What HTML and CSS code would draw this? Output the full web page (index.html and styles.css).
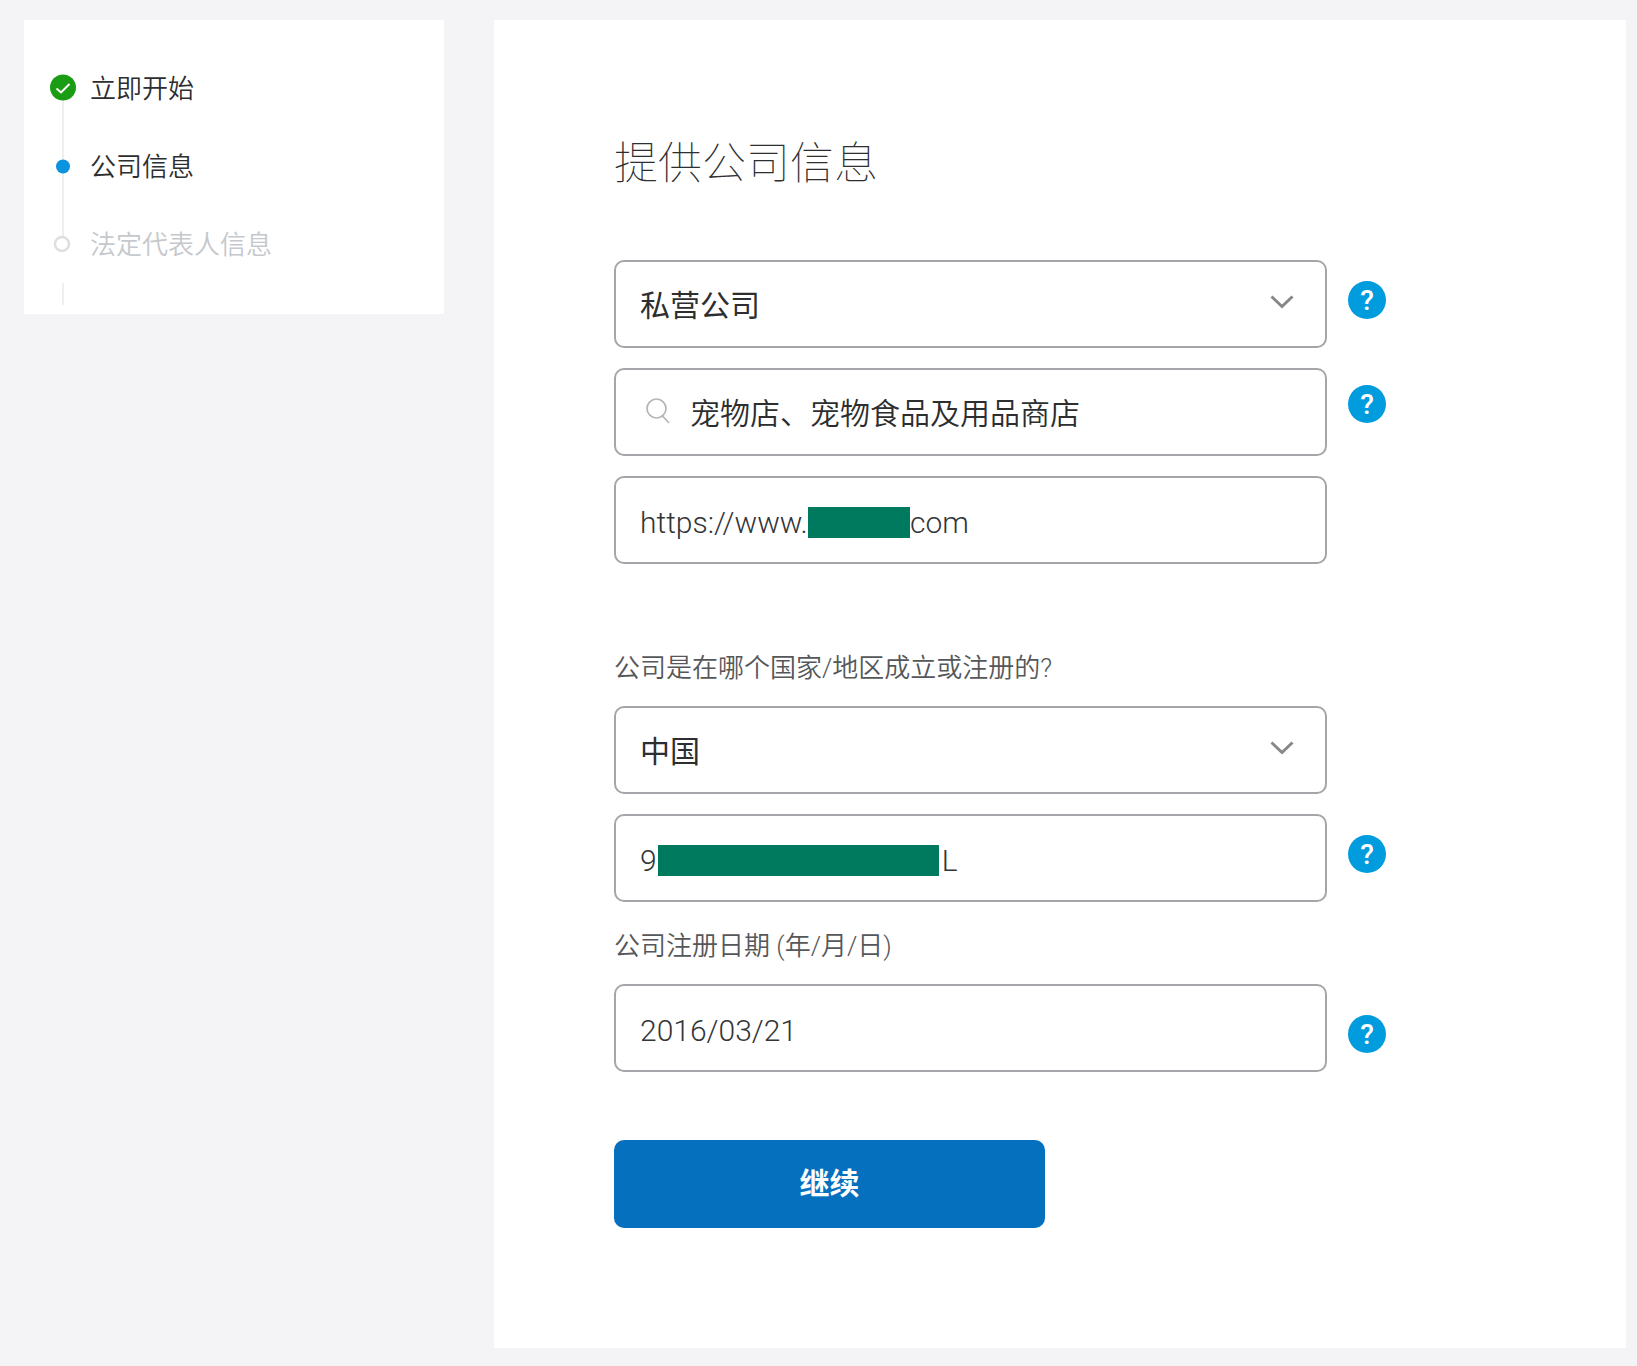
FILE: index.html
```html
<!DOCTYPE html>
<html lang="zh-CN">
<head>
<meta charset="utf-8">
<meta name="viewport" content="width=device-width, initial-scale=1">
<title>提供公司信息</title>
<link rel="stylesheet" href="styles.css">
</head>
<body>
<div class="page">
  <aside class="sidebar">
    <ol class="steps">
      <li class="step step--linked">
        <svg class="step__marker" viewBox="0 0 26 26" aria-hidden="true"><circle cx="13" cy="12.500" r="13" fill="#1a9c14"/><path d="M6.500 13.500l4.500 4 8.500-8.500" fill="none" stroke="#fff" stroke-width="2"/></svg>
        <span class="step__name">立即开始</span>
      </li>
      <li class="step step--linked" aria-current="step">
        <svg class="step__marker" viewBox="0 0 26 26" aria-hidden="true"><circle cx="13" cy="13.500" r="7" fill="#0c93e0"/></svg>
        <span class="step__name">公司信息</span>
      </li>
      <li class="step step--upcoming">
        <svg class="step__marker" viewBox="0 0 26 26" aria-hidden="true"><circle cx="12" cy="13" r="7" fill="#fff" stroke="#dedede" stroke-width="2.500"/></svg>
        <span class="step__name">法定代表人信息</span>
      </li>
      <li class="steps__more" aria-hidden="true"></li>
    </ol>
  </aside>

  <main class="panel">
    <form class="form">
      <h1 class="title">提供公司信息</h1>

      <div class="group">
        <div class="row">
          <div class="field">
            <select class="control control--select" aria-label="公司类型"><option>私营公司</option></select>
            <svg class="field__chevron" viewBox="0 0 24 14" aria-hidden="true"><path d="M1.500 1.500L12 11.500 22.500 1.500" fill="none" stroke="#87878a" stroke-width="3"/></svg>
          </div>
          <button class="help" type="button" aria-label="帮助">?</button>
        </div>
        <div class="row">
          <div class="field">
            <svg class="field__search" viewBox="0 0 24 26" aria-hidden="true"><circle cx="10.500" cy="10.500" r="9.500" fill="none" stroke="#b2b4b8" stroke-width="1.700"/><path d="M16 17.500l7 7.500" fill="none" stroke="#b2b4b8" stroke-width="1.700"/></svg>
            <input class="control control--search" type="text" aria-label="经营类别" value="宠物店、宠物食品及用品商店">
          </div>
          <button class="help help--high" type="button" aria-label="帮助">?</button>
        </div>
        <div class="row">
          <div class="field">
            <input class="control" type="text" aria-label="网站" value="https://www.              com">
            <span class="mask mask--site"></span>
          </div>
        </div>
      </div>

      <div class="group group--country">
        <label class="label" for="country">公司是在哪个国家/地区成立或注册的?</label>
        <div class="row">
          <div class="field">
            <select class="control control--select" id="country"><option>中国</option></select>
            <svg class="field__chevron" viewBox="0 0 24 14" aria-hidden="true"><path d="M1.500 1.500L12 11.500 22.500 1.500" fill="none" stroke="#87878a" stroke-width="3"/></svg>
          </div>
        </div>
        <div class="row">
          <div class="field">
            <input class="control" type="text" aria-label="统一社会信用代码" value="9                                       L">
            <span class="mask mask--code"></span>
          </div>
          <button class="help" type="button" aria-label="帮助">?</button>
        </div>
      </div>

      <div class="group group--date">
        <label class="label" for="date">公司注册日期 (年/月/日)</label>
        <div class="row">
          <div class="field">
            <input class="control" id="date" type="text" value="2016/03/21">
          </div>
          <button class="help help--low" type="button" aria-label="帮助">?</button>
        </div>
      </div>

      <button class="submit" type="submit">继续</button>
    </form>
  </main>
</div>
</body>
</html>
```
FILE: styles.css
```css
* {
  box-sizing: border-box;
}

body {
  margin: 0;
  background: #f4f4f6;
  color: #2c2e2f;
  font-family: Roboto, "Noto Sans CJK SC", sans-serif;
}

.page {
  display: flex;
  align-items: flex-start;
  gap: 50px;
  padding: 20px 11px 18px 24px;
}

/* Progress */
.sidebar {
  flex: 0 1 420px;
  background: #fff;
}

.steps {
  margin: 0;
  padding: 29px 26px 9px;
  list-style: none;
}

.step {
  position: relative;
  display: flex;
  align-items: center;
  gap: 14px;
  height: 78px;
  font-size: 26px;
  font-weight: 350;
  line-height: 36px;
}

.step--linked::before {
  content: "";
  position: absolute;
  left: 12px;
  top: 50%;
  width: 2px;
  height: 100%;
  background: #efefef;
}

.step--upcoming {
  color: #c5c8cc;
}

.step__marker {
  position: relative;
  z-index: 1;
  flex: none;
  width: 26px;
  height: 26px;
  overflow: visible;
}

.step__name {
  padding-top: 2px;
}

.steps__more {
  width: 2px;
  height: 22px;
  margin-left: 12px;
  background: #efefef;
}

/* Form */
.panel {
  flex: 1;
  min-width: 0;
  padding: 114px 120px 120px;
  background: #fff;
}

.title {
  margin: 0 0 66px;
  font-size: 44px;
  font-weight: 100;
  line-height: 60px;
}

.group {
  display: grid;
  gap: 20px;
}

.group--country {
  margin-top: 86px;
}

.group--date {
  margin-top: 26px;
}

.label {
  color: #55575a;
  font-size: 26px;
  font-weight: 350;
  line-height: 36px;
}

.row {
  display: grid;
  grid-template-columns: minmax(0, 713px) 38px;
  gap: 21px;
  align-items: start;
}

.field {
  position: relative;
}

.control {
  display: block;
  width: 100%;
  height: 88px;
  padding: 4px 24px 0;
  border: 2px solid #a6a6aa;
  border-radius: 10px;
  background: #fff;
  color: #333537;
  font: 300 30px Roboto, "Noto Sans CJK SC", sans-serif;
}

.control--select {
  appearance: none;
  padding-top: 2px;
  color: #2c2e2f;
  font-weight: 400;
}

.control--search {
  padding: 0 24px 2px 74px;
  color: #2c2e2f;
  font-weight: 350;
}

.field__chevron {
  position: absolute;
  top: 35px;
  right: 33px;
  width: 24px;
  height: 14px;
  pointer-events: none;
}

.field__search {
  position: absolute;
  top: 30px;
  left: 32px;
  width: 24px;
  height: 26px;
}

.mask {
  position: absolute;
  top: 31px;
  height: 31px;
  background: #007a5e;
}

.mask--site {
  left: 194px;
  width: 102px;
}

.mask--code {
  left: 44px;
  width: 281px;
}

.help {
  width: 38px;
  height: 38px;
  margin-top: 21px;
  padding: 2px 0 0;
  border: 0;
  border-radius: 50%;
  background: #009cde;
  color: #fff;
  font: 500 28px/36px Roboto, sans-serif;
}

.help--high {
  margin-top: 17px;
}

.help--low {
  margin-top: 31px;
}

.submit {
  display: block;
  width: 431px;
  max-width: 100%;
  height: 88px;
  margin-top: 68px;
  padding: 0 0 6px;
  border: 0;
  border-radius: 10px;
  background: #0570be;
  color: #fff;
  font: 700 30px Roboto, "Noto Sans CJK SC", sans-serif;
}
```
